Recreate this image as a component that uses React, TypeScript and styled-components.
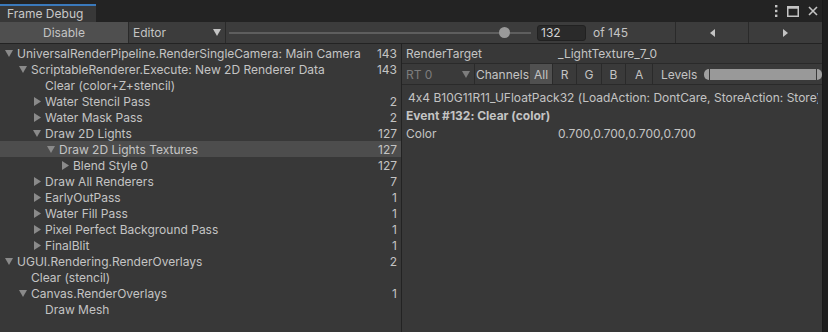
import React from "react";
import styled, { createGlobalStyle } from "styled-components";

const Global = createGlobalStyle`
  html, body { margin: 0; padding: 0; background: #1e1e1e; }
  body {
    font-family: Inter, "Noto Sans", sans-serif;
    font-size: 12px;
    color: #c4c4c4;
    font-feature-settings: "calt" 0;
  }
  * { box-sizing: border-box; }
`;

const Screen = styled.div`
  width: 828px;
  height: 332px;
  display: flex;
  background: #1e1e1e;
  overflow: hidden;
`;

const Window = styled.div`
  width: 823px;
  height: 332px;
  display: flex;
  flex-direction: column;
  background: #383838;
  border-right: 1px solid #1a1a1a;
`;

const TabStrip = styled.div`
  height: 22px;
  flex: none;
  display: flex;
  align-items: flex-end;
  background: #232323;
`;

const Tab = styled.div`
  width: 96px;
  height: 18px;
  background: #383838;
  border-top: 2px solid #3a79bb;
  padding-left: 7px;
  line-height: 15px;
  color: #c8c8c8;
`;

const WindowIcons = styled.div`
  margin-left: auto;
  height: 22px;
  display: flex;
  align-items: center;
  gap: 9px;
  padding-right: 4px;
`;

const Toolbar = styled.div`
  height: 22px;
  flex: none;
  display: flex;
  align-items: stretch;
  background: #3c3c3c;
  border-bottom: 1px solid #232323;
`;

const ToolButton = styled.div<{ $w: number; $active?: boolean }>`
  width: ${(p) => p.$w}px;
  flex: none;
  display: flex;
  align-items: center;
  justify-content: center;
  background: ${(p) => (p.$active ? "#4f4f4f" : "#3c3c3c")};
  border-right: 1px solid #2a2a2a;
`;

const NavButton = styled(ToolButton)`
  border-right: none;
  border-left: 1px solid #2a2a2a;
`;

const Dropdown = styled.div<{ $w: number; $disabled?: boolean }>`
  width: ${(p) => p.$w}px;
  flex: none;
  display: flex;
  align-items: center;
  justify-content: space-between;
  padding: 0 4px 0 4px;
  color: ${(p) => (p.$disabled ? "#7d7d7d" : "#c4c4c4")};
  border-right: 1px solid #2a2a2a;
`;

const SliderWrap = styled.div`
  position: relative;
  width: 302px;
  margin-left: 3px;
  flex: none;
  display: flex;
  align-items: center;
`;

const SliderTrack = styled.div`
  width: 100%;
  height: 2px;
  background: #5e5e5e;
`;

const SliderThumb = styled.div`
  position: absolute;
  top: 50%;
  width: 11px;
  height: 11px;
  margin-top: -6px;
  margin-left: -5px;
  border-radius: 50%;
  background: #999999;
`;

const NumberField = styled.div`
  width: 49px;
  height: 16px;
  margin: auto 0 auto 6px;
  flex: none;
  background: #2a2a2a;
  border: 1px solid #212121;
  border-radius: 3px;
  padding-left: 3px;
  line-height: 14px;
  color: #d2d2d2;
`;

const OfLabel = styled.div`
  margin-left: 7px;
  display: flex;
  align-items: center;
  flex: 1;
`;

const Body = styled.div`
  flex: 1;
  display: flex;
  min-height: 0;
`;

const Tree = styled.div`
  width: 402px;
  flex: none;
  padding-top: 1px;
  border-right: 1px solid #232323;
`;

const Row = styled.div<{ $level: number; $selected?: boolean }>`
  height: 16px;
  display: flex;
  align-items: center;
  padding-left: ${(p) => 3 + p.$level * 14}px;
  padding-right: 4px;
  background: ${(p) => (p.$selected ? "#4d4d4d" : "transparent")};
  white-space: nowrap;
`;

const Arrow = styled.span`
  width: 14px;
  height: 16px;
  flex: none;
  display: flex;
  align-items: center;
  justify-content: center;
  padding-right: 2px;
`;

const RowName = styled.span`
  flex: 1;
`;

const RowCount = styled.span`
  text-align: right;
`;

const Details = styled.div`
  flex: 1;
  display: flex;
  flex-direction: column;
  min-width: 0;
  overflow: hidden;
`;

const TargetRow = styled.div`
  height: 20px;
  display: flex;
  align-items: center;
  padding-left: 4px;
  border-bottom: 1px solid #2a2a2a;
`;

const PropLabel = styled.span`
  width: 152px;
  flex: none;
`;

const ChannelBar = styled.div`
  height: 21px;
  display: flex;
  align-items: stretch;
  background: #3a3a3a;
  border-bottom: 1px solid #2a2a2a;
`;

const BarLabel = styled.div<{ $pad: number }>`
  display: flex;
  align-items: center;
  padding-left: ${(p) => p.$pad}px;
  padding-right: 1px;
`;

const ChannelButton = styled.div<{ $w: number; $active?: boolean }>`
  width: ${(p) => p.$w}px;
  flex: none;
  display: flex;
  align-items: center;
  justify-content: center;
  background: ${(p) => (p.$active ? "#505050" : "transparent")};
  border-right: 1px solid #2a2a2a;
`;

const LevelsSlider = styled.div`
  width: 119px;
  height: 11px;
  margin: auto 0 auto 6px;
  display: flex;
  gap: 1px;
`;

const LevelsCap = styled.div<{ $side: "l" | "r" }>`
  width: 5px;
  background: #a0a0a0;
  border-radius: ${(p) => (p.$side === "l" ? "5px 0 0 5px" : "0 5px 5px 0")};
`;

const LevelsBar = styled.div`
  flex: 1;
  background: #999999;
`;

const Info = styled.div`
  padding: 3px 4px 0 4px;
  display: flex;
  flex-direction: column;
`;

const InfoLine = styled.div<{ $bold?: boolean; $indent?: number }>`
  height: 18px;
  display: flex;
  align-items: center;
  white-space: nowrap;
  overflow: hidden;
  padding-left: ${(p) => p.$indent ?? 0}px;
  font-weight: ${(p) => (p.$bold ? 700 : 400)};
`;

const TriDown = ({ color = "#8a8a8a" }: { color?: string }) => (
  <svg width="8" height="7" viewBox="0 0 8 7">
    <polygon points="0,0 8,0 4,7" fill={color} />
  </svg>
);

const TriRight = () => (
  <svg width="7" height="9" viewBox="0 0 7 9">
    <polygon points="0,0 7,4.5 0,9" fill="#8a8a8a" />
  </svg>
);

type Node = { name: string; level: number; count?: number; state?: "open" | "closed"; selected?: boolean };

const nodes: Node[] = [
  { name: "UniversalRenderPipeline.RenderSingleCamera: Main Camera", level: 0, count: 143, state: "open" },
  { name: "ScriptableRenderer.Execute: New 2D Renderer Data", level: 1, count: 143, state: "open" },
  { name: "Clear (color+Z+stencil)", level: 2 },
  { name: "Water Stencil Pass", level: 2, count: 2, state: "closed" },
  { name: "Water Mask Pass", level: 2, count: 2, state: "closed" },
  { name: "Draw 2D Lights", level: 2, count: 127, state: "open" },
  { name: "Draw 2D Lights Textures", level: 3, count: 127, state: "open", selected: true },
  { name: "Blend Style 0", level: 4, count: 127, state: "closed" },
  { name: "Draw All Renderers", level: 2, count: 7, state: "closed" },
  { name: "EarlyOutPass", level: 2, count: 1, state: "closed" },
  { name: "Water Fill Pass", level: 2, count: 1, state: "closed" },
  { name: "Pixel Perfect Background Pass", level: 2, count: 1, state: "closed" },
  { name: "FinalBlit", level: 2, count: 1, state: "closed" },
  { name: "UGUI.Rendering.RenderOverlays", level: 0, count: 2, state: "open" },
  { name: "Clear (stencil)", level: 1 },
  { name: "Canvas.RenderOverlays", level: 1, count: 1, state: "open" },
  { name: "Draw Mesh", level: 2 },
];

export default function App() {
  return (
    <>
      <Global />
      <Screen>
        <Window>
          <TabStrip>
            <Tab>Frame Debug</Tab>
            <WindowIcons>
              <svg width="4" height="12" viewBox="0 0 4 12">
                <rect x="1" y="0" width="2.4" height="2.4" fill="#c4c4c4" />
                <rect x="1" y="4.8" width="2.4" height="2.4" fill="#c4c4c4" />
                <rect x="1" y="9.6" width="2.4" height="2.4" fill="#c4c4c4" />
              </svg>
              <svg width="12" height="11" viewBox="0 0 12 11">
                <rect x="0.75" y="0.75" width="10.5" height="9.5" fill="none" stroke="#c4c4c4" strokeWidth="1.5" />
                <rect x="0.75" y="0.75" width="10.5" height="2" fill="#c4c4c4" />
              </svg>
              <svg width="10" height="10" viewBox="0 0 10 10">
                <path d="M1 1 L9 9 M9 1 L1 9" stroke="#c4c4c4" strokeWidth="1.6" />
              </svg>
            </WindowIcons>
          </TabStrip>
          <Toolbar>
            <ToolButton $w={129} $active>Disable</ToolButton>
            <Dropdown $w={97}>
              <span>Editor</span>
              <TriDown color="#c4c4c4" />
            </Dropdown>
            <SliderWrap>
              <SliderTrack />
              <SliderThumb style={{ left: `${(131 / 144) * 100}%` }} />
            </SliderWrap>
            <NumberField>132</NumberField>
            <OfLabel>of 145</OfLabel>
            <NavButton $w={73}>
              <svg width="5" height="8" viewBox="0 0 5 8"><polygon points="5,0 0,4 5,8" fill="#c4c4c4" /></svg>
            </NavButton>
            <NavButton $w={74}>
              <svg width="5" height="8" viewBox="0 0 5 8"><polygon points="0,0 5,4 0,8" fill="#c4c4c4" /></svg>
            </NavButton>
          </Toolbar>
          <Body>
            <Tree>
              {nodes.map((n, i) => (
                <Row key={i} $level={n.level} $selected={n.selected}>
                  <Arrow>{n.state === "open" ? <TriDown /> : n.state === "closed" ? <TriRight /> : null}</Arrow>
                  <RowName>{n.name}</RowName>
                  {n.count !== undefined && <RowCount>{n.count}</RowCount>}
                </Row>
              ))}
            </Tree>
            <Details>
              <TargetRow>
                <PropLabel>RenderTarget</PropLabel>
                <span>_LightTexture_7_0</span>
              </TargetRow>
              <ChannelBar>
                <Dropdown $w={73} $disabled>
                  <span>RT 0</span>
                  <TriDown color="#7d7d7d" />
                </Dropdown>
                <BarLabel $pad={1}>Channels</BarLabel>
                <ChannelButton $w={23} $active>All</ChannelButton>
                <ChannelButton $w={24}>R</ChannelButton>
                <ChannelButton $w={25}>G</ChannelButton>
                <ChannelButton $w={24}>B</ChannelButton>
                <ChannelButton $w={27}>A</ChannelButton>
                <BarLabel $pad={8}>Levels</BarLabel>
                <LevelsSlider>
                  <LevelsCap $side="l" />
                  <LevelsBar />
                  <LevelsCap $side="r" />
                </LevelsSlider>
              </ChannelBar>
              <Info>
                <InfoLine $indent={2}>4x4 B10G11R11_UFloatPack32 (LoadAction: DontCare, StoreAction: Store)</InfoLine>
                <InfoLine $bold>Event #132: Clear (color)</InfoLine>
                <InfoLine>
                  <PropLabel>Color</PropLabel>
                  <span>0.700,0.700,0.700,0.700</span>
                </InfoLine>
              </Info>
            </Details>
          </Body>
        </Window>
      </Screen>
    </>
  );
}
